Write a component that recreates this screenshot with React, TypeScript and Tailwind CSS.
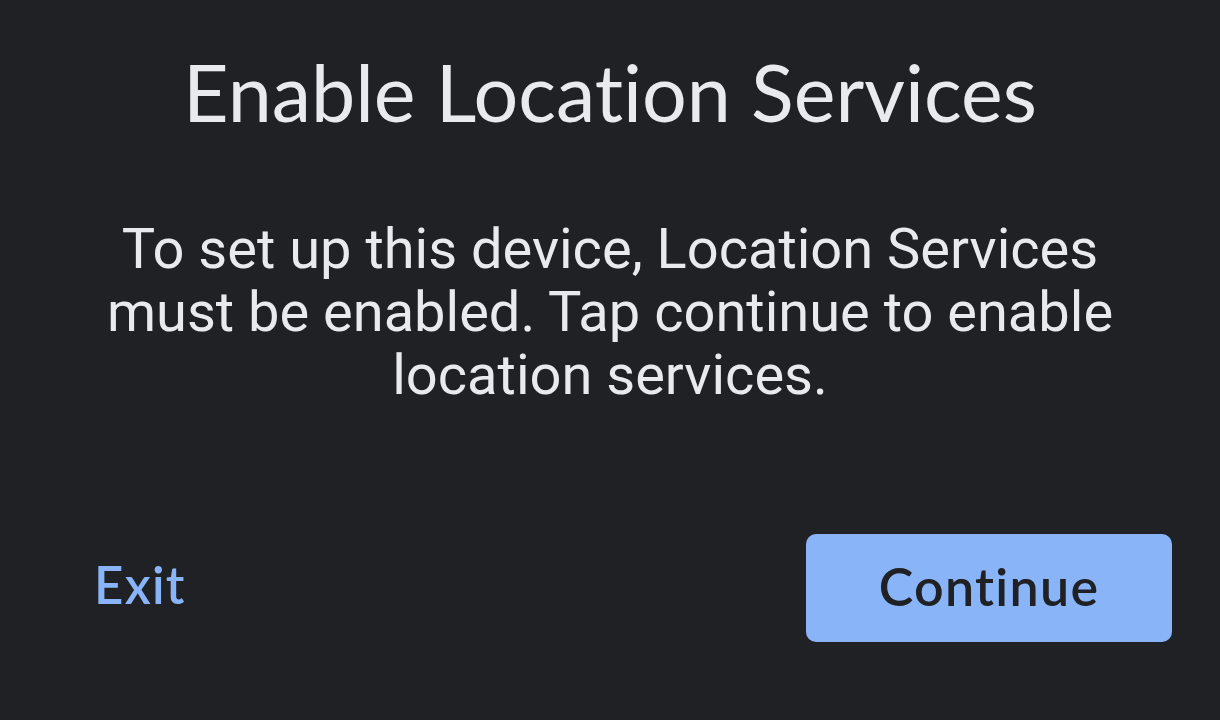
export default function App() {
  return (
    <div className="w-[1220px] h-[720px] bg-[#202124] flex flex-col overflow-hidden">
      {/* Title */}
      <h1 className="pt-[46px] text-center text-[#e8eaed] text-[79px] leading-[92px] font-['Lato',sans-serif] font-normal [font-variant-ligatures:none]">
        Enable Location Services
      </h1>
      {/* Body */}
      <p className="mt-[80px] mx-auto w-[1060px] text-center text-[#e8eaed] text-[56px] leading-[63px] font-['Roboto',sans-serif]">
        To set up this device, Location Services must be enabled. Tap continue to enable location services.
      </p>
      {/* Actions */}
      <div className="mt-auto mb-[78px] flex items-center justify-between pl-[94px] pr-[48px]">
        <button className="pb-[6px] text-[#8ab4f8] text-[51px] font-semibold font-['Lato',sans-serif] tracking-wide">
          Exit
        </button>
        <button className="w-[366px] h-[108px] pb-[5px] rounded-[10px] bg-[#8ab4f8] text-[#202124] text-[52px] font-semibold font-['Lato',sans-serif] tracking-wide [font-variant-ligatures:none]">
          Continue
        </button>
      </div>
    </div>
  );
}
